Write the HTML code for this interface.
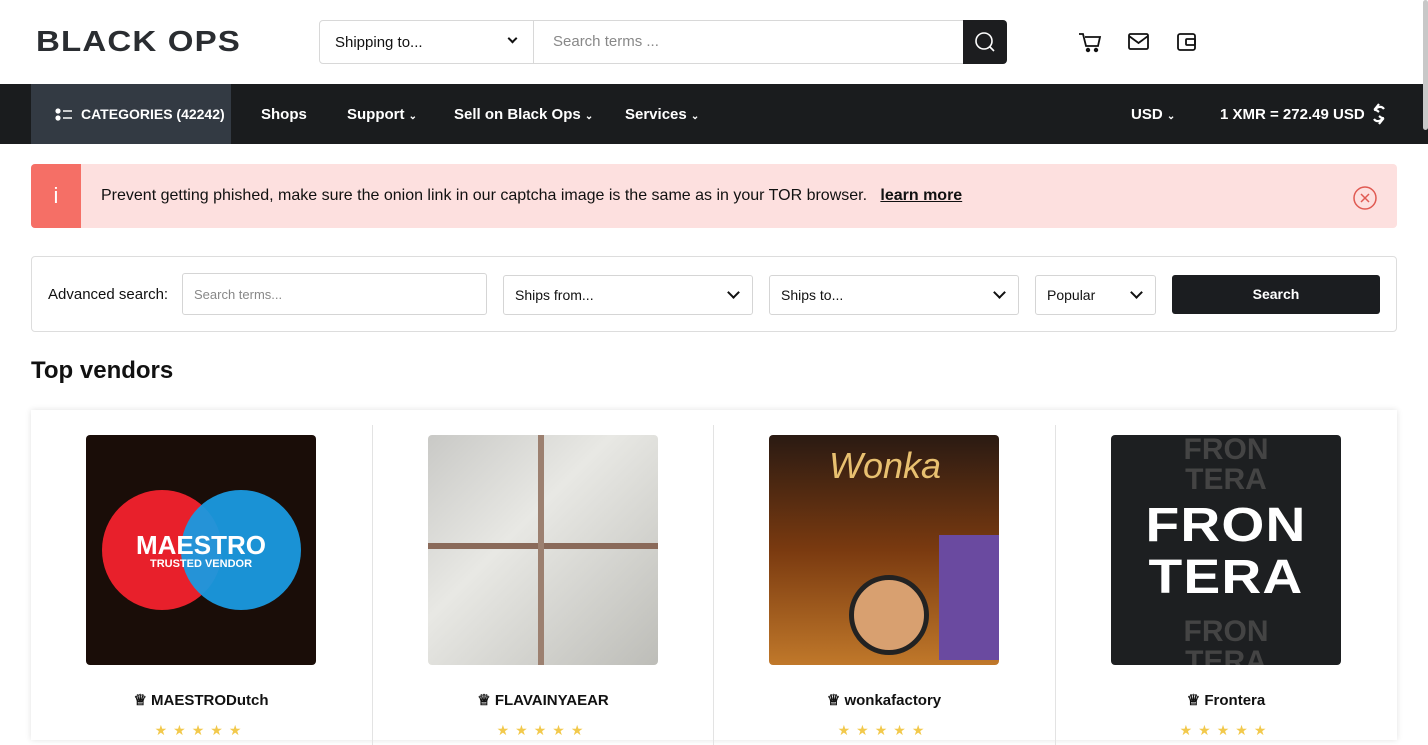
<!DOCTYPE html>
<html><head><meta charset="utf-8"><style>
*{box-sizing:border-box;margin:0;padding:0}
body{width:1428px;height:730px;overflow:hidden;background:#fff;font-family:"Liberation Sans",sans-serif;color:#111;position:relative}
.abs{position:absolute}
.logo{left:36px;top:26px;font-size:29px;font-weight:bold;letter-spacing:1px;color:#2a2d31;transform:scaleX(1.14);transform-origin:left}
.ship{left:319px;top:20px;width:215px;height:44px;border:1px solid #d8d8d8;border-radius:4px 0 0 4px;font-size:15px;padding:13px 15px}
.srch{left:533px;top:20px;width:431px;height:44px;border:1px solid #d8d8d8;font-size:15px;color:#888;padding:12px 19px}
.sbtn{left:963px;top:20px;width:44px;height:44px;background:#1c1d1f;border-radius:0 4px 4px 0}
.nav{left:0;top:84px;width:1428px;height:60px;background:#1a1c1e}
.cat{left:31px;top:84px;width:200px;height:60px;background:#333a43;color:#fff;font-weight:bold;font-size:14px;padding:22px 0 0 50px}
.ni{top:106px;color:#fff;font-weight:bold;font-size:15px}
.alert{left:31px;top:164px;width:1366px;height:64px;background:#fde0df;border-radius:4px}
.alert .i{position:absolute;left:0;top:0;width:50px;height:64px;background:#f56f66;border-radius:4px 0 0 4px;color:#fff;font-size:22px;text-align:center;line-height:64px}
.adv{left:31px;top:256px;width:1366px;height:76px;border:1px solid #ddd;border-radius:4px}
.box{position:absolute;top:18px;height:40px;border:1px solid #d5d5d5;border-radius:3px;font-size:14px;padding:11px 11px}
.chev{position:absolute;right:14px;top:12px;width:9px;height:9px;border-right:2px solid #111;border-bottom:2px solid #111;transform:rotate(45deg)}
.cards{left:31px;top:410px;width:1366px;height:330px;box-shadow:0 0 6px rgba(0,0,0,.12)}
.col{position:absolute;top:15px;height:320px;border-left:1px solid #e3e3e3}
.img{position:absolute;top:435px;width:230px;height:230px;border-radius:4px;overflow:hidden}
.nm{position:absolute;top:691px;font-size:15px;font-weight:bold;width:230px;text-align:center}
.star{position:absolute;top:722px;color:#f2c94c;font-size:14px;letter-spacing:6px;width:230px;text-align:center}
</style></head><body>
<div class="abs logo">BLACK OPS</div>
<div class="abs ship">Shipping to...<span style="position:absolute;right:17px;top:14px;width:7px;height:7px;border-right:2px solid #111;border-bottom:2px solid #111;transform:rotate(45deg)"></span></div>
<div class="abs srch">Search terms ...</div>
<div class="abs sbtn"><svg width="44" height="44"><circle cx="21" cy="21" r="8" fill="none" stroke="#fff" stroke-width="1.6"/><path d="M27 27l4 4" stroke="#fff" stroke-width="1.6"/></svg></div>
<svg class="abs" style="left:1078px;top:30px" width="130" height="26" fill="none" stroke="#111" stroke-width="1.8"><path d="M1 4h4l3 12h12l2-9H7"/><circle cx="10" cy="20" r="1.3" fill="#111"/><circle cx="18" cy="20" r="1.3" fill="#111"/><rect x="51" y="4" width="19" height="15" rx="1.5"/><path d="M51 6l9.5 7 9.5-7"/><rect x="100" y="4" width="17" height="16" rx="2"/><rect x="108" y="9" width="9" height="6" rx="1"/></svg>
<div class="abs nav"></div>
<div class="abs cat"><svg style="position:absolute;left:24px;top:24px" width="18" height="13"><circle cx="3" cy="3" r="2.6" fill="#fff"/><circle cx="3" cy="10" r="2.6" fill="#fff"/><path d="M8 3h9M8 10h9" stroke="#fff" stroke-width="1.6"/></svg>CATEGORIES (42242)</div>
<div class="abs ni" style="left:261px">Shops</div>
<div class="abs ni" style="left:347px">Support <span style="font-size:10px">&#8964;</span></div>
<div class="abs ni" style="left:454px">Sell on Black Ops <span style="font-size:10px">&#8964;</span></div>
<div class="abs ni" style="left:625px">Services <span style="font-size:10px">&#8964;</span></div>
<div class="abs ni" style="left:1131px">USD <span style="font-size:10px">&#8964;</span></div>
<div class="abs ni" style="left:1220px">1 XMR = 272.49 USD</div>
<svg class="abs" style="left:1369px;top:102px" width="20" height="24" fill="none" stroke="#fff" stroke-width="2.2"><path d="M6 9a5 5 0 0 1 9-2M14 15a5 5 0 0 1-9 2"/><path d="M10 2l-4 5 4 3M10 22l4-5-4-3"/></svg>
<div class="abs alert"><div class="i">i</div><div style="position:absolute;left:70px;top:23px;font-size:16px">Prevent getting phished, make sure the onion link in our captcha image is the same as in your TOR browser. &nbsp; <b style="text-decoration:underline">learn more</b></div>
<svg style="position:absolute;right:19px;top:21px" width="26" height="26" fill="none" stroke="#e05a52" stroke-width="1.5"><circle cx="13" cy="13" r="11"/><path d="M9 9l8 8M17 9l-8 8"/></svg></div>
<div class="abs adv">
<div style="position:absolute;left:16px;top:29px;font-size:15px">Advanced search:</div>
<div class="box" style="left:150px;width:305px;color:#888;font-size:13px;top:16px;height:42px;padding-top:13px">Search terms...</div>
<div class="box" style="left:471px;width:250px">Ships from...<span class="chev"></span></div>
<div class="box" style="left:737px;width:250px">Ships to...<span class="chev"></span></div>
<div class="box" style="left:1003px;width:121px">Popular<span class="chev"></span></div>
<div style="position:absolute;left:1140px;top:18px;width:208px;height:39px;background:#1b1d20;border-radius:3px;color:#fff;font-weight:bold;font-size:14px;text-align:center;line-height:39px">Search</div>
</div>
<div class="abs" style="left:31px;top:357px;font-size:24px;font-weight:bold">Top vendors</div>
<div class="abs cards"></div>
<div class="col" style="left:372px;top:425px"></div>
<div class="col" style="left:713px;top:425px"></div>
<div class="col" style="left:1055px;top:425px"></div>
<div class="img" style="left:86px;background:#1a0d08"><div style="position:absolute;left:16px;top:55px;width:120px;height:120px;border-radius:50%;background:#e8202b"></div><div style="position:absolute;left:95px;top:55px;width:120px;height:120px;border-radius:50%;background:#1a9ae0;opacity:.95"></div><div style="position:absolute;left:0;top:95px;width:230px;text-align:center;color:#fff;font-weight:bold;font-size:26px">MAESTRO</div><div style="position:absolute;left:0;top:123px;width:230px;text-align:center;color:#fff;font-weight:bold;font-size:11px">TRUSTED VENDOR</div></div>
<div class="img" style="left:428px;background:linear-gradient(135deg,#c9c9c6,#e8e8e4 40%,#bdbdb8);"><div style="position:absolute;left:0;top:108px;width:230px;height:6px;background:#8a6a5a"></div><div style="position:absolute;left:110px;top:0;width:6px;height:230px;background:#9c8070"></div></div>
<div class="img" style="left:769px;background:linear-gradient(180deg,#2a1a12,#7a3a10 50%,#c0782a)"><div style="position:absolute;left:80px;top:140px;width:80px;height:80px;border-radius:50%;background:#d8a070;border:5px solid #222"></div><div style="position:absolute;left:170px;top:100px;width:60px;height:125px;background:#6a4aa0"></div><div style="position:absolute;left:60px;top:10px;color:#e8c070;font-size:36px;font-style:italic">Wonka</div></div>
<div class="img" style="left:1111px;background:#1d1f21"><div style="position:absolute;width:230px;top:65px;text-align:center;color:#fff;font-weight:900;font-size:48px;line-height:52px;letter-spacing:1px;transform:scaleX(1.15)">FRON<br>TERA</div><div style="position:absolute;width:230px;top:0;text-align:center;color:#444;font-weight:bold;font-size:30px;line-height:30px">FRON<br>TERA</div><div style="position:absolute;width:230px;top:182px;text-align:center;color:#444;font-weight:bold;font-size:30px;line-height:30px">FRON<br>TERA</div></div>
<div class="nm" style="left:86px">♕ MAESTRODutch</div>
<div class="nm" style="left:428px">♕ FLAVAINYAEAR</div>
<div class="nm" style="left:769px">♕ wonkafactory</div>
<div class="nm" style="left:1111px">♕ Frontera</div>
<div class="star" style="left:86px">★★★★★</div>
<div class="star" style="left:428px">★★★★★</div>
<div class="star" style="left:769px">★★★★★</div>
<div class="star" style="left:1111px">★★★★★</div>
<div class="abs" style="left:1423px;top:0;width:5px;height:130px;background:#c8c8c8;border-radius:3px"></div>
</body></html>
